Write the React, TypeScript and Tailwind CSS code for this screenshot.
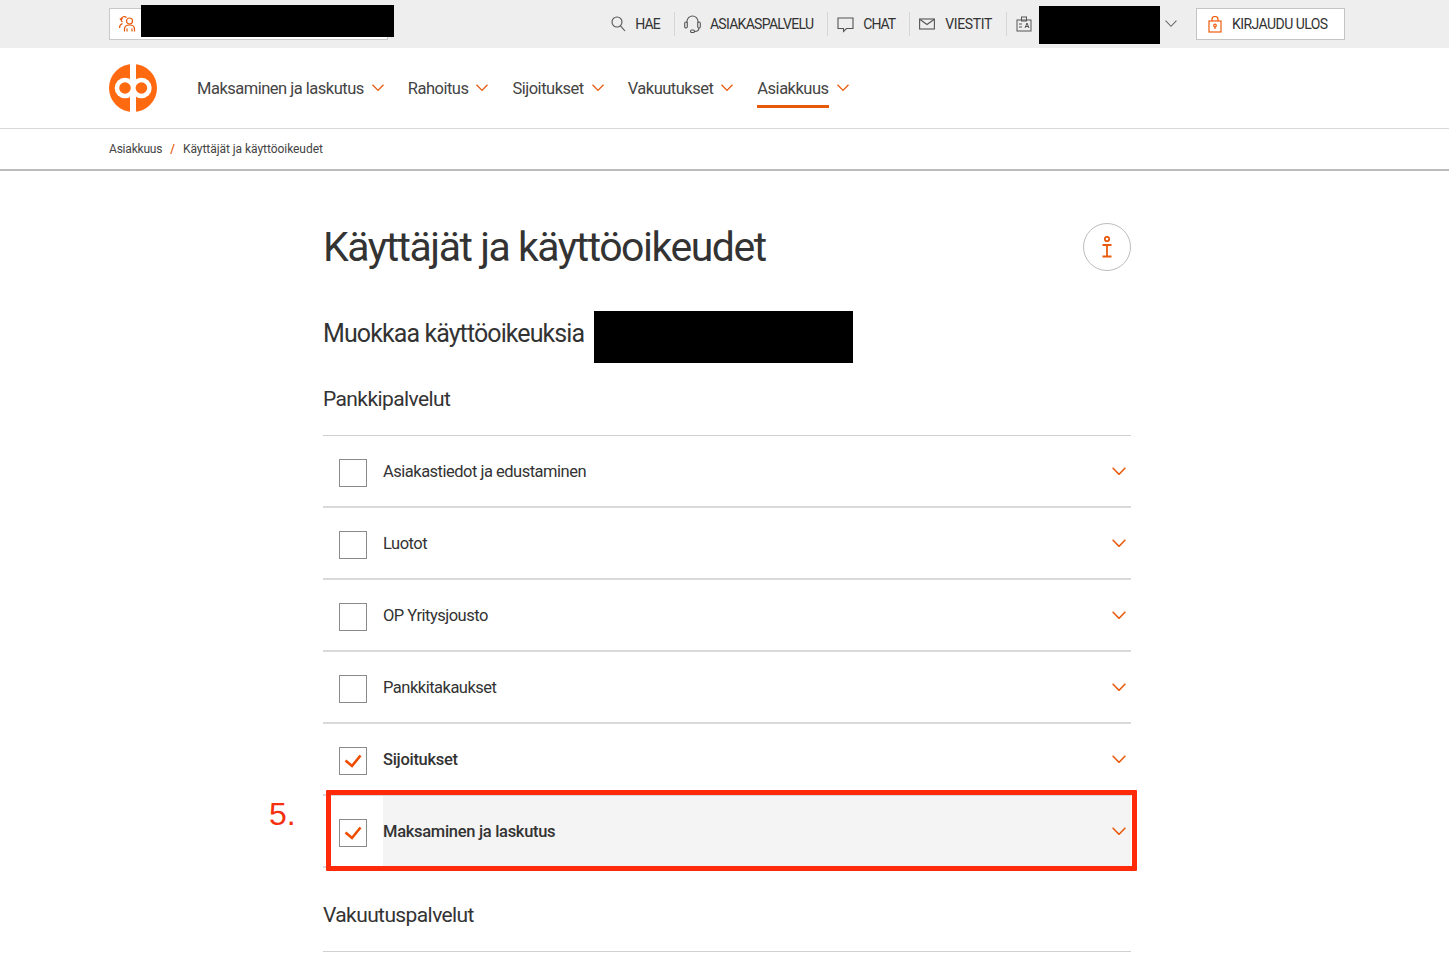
const font = "[font-family:Roboto,'Liberation_Sans',sans-serif]";

const navItems = [
  { label: 'Maksaminen ja laskutus', active: false },
  { label: 'Rahoitus', active: false },
  { label: 'Sijoitukset', active: false },
  { label: 'Vakuutukset', active: false },
  { label: 'Asiakkuus', active: true },
];

const rows = [
  { label: 'Asiakastiedot ja edustaminen', checked: false },
  { label: 'Luotot', checked: false },
  { label: 'OP Yritysjousto', checked: false },
  { label: 'Pankkitakaukset', checked: false },
  { label: 'Sijoitukset', checked: true },
  { label: 'Maksaminen ja laskutus', checked: true, open: true },
];

function OpLogo() {
  return (
    <svg width="48" height="48" viewBox="0 0 48 48">
      <circle cx="24" cy="24" r="24" fill="#ff6a10" />
      <rect x="21" y="0" width="6" height="48" fill="#fff" />
      <circle cx="16" cy="24" r="10.300" fill="#fff" />
      <circle cx="32.400" cy="24" r="10.300" fill="#fff" />
      <circle cx="16" cy="24" r="5.800" fill="#ff6a10" />
      <circle cx="32.400" cy="24" r="5.800" fill="#ff6a10" />
    </svg>
  );
}

function PeopleIcon() {
  return (
    <svg width="18" height="18" viewBox="0 0 18 18" fill="none" stroke="#e8590c" strokeWidth="1.200">
      <circle cx="11.500" cy="6" r="3" />
      <path d="M6.500 16.500v-2.500c0-2.500 2-4 5-4s5 1.500 5 4v2.500M9 16.500v-3M14 16.500v-3" />
      <path d="M8.500 2.700A3 3 0 0 0 3.200 4.500c0 1.200.5 2 1.300 2.600" />
      <path d="M1.500 13c0-2.300 1-3.800 3-4.500" />
      <path d="M1.800 3.500l1.500 1.300 1.200-1.600" />
    </svg>
  );
}

function SearchIcon() {
  return (
    <svg width="15" height="16" viewBox="0 0 15 16" fill="none" stroke="#555" strokeWidth="1.100">
      <circle cx="6" cy="6" r="5" />
      <path d="M9.500 9.800L14 15" />
    </svg>
  );
}

function HeadsetIcon() {
  return (
    <svg width="17" height="18" viewBox="0 0 17 18" fill="none" stroke="#555" strokeWidth="1.100">
      <path d="M3 8V6.500a5.500 5.500 0 0 1 11 0V8" />
      <rect x="0.700" y="7" width="2.600" height="6" rx="1.200" />
      <rect x="13.700" y="7" width="2.600" height="6" rx="1.200" />
      <path d="M15 13c0 2.500-2 3.500-4.500 3.500" />
      <rect x="6.500" y="15" width="4" height="2.500" rx="1.200" />
    </svg>
  );
}

function ChatIcon() {
  return (
    <svg width="17" height="17" viewBox="0 0 17 17" fill="none" stroke="#555" strokeWidth="1.100">
      <path d="M1 2h15v10.500H9.500L6.500 15.500v-3H1z" />
    </svg>
  );
}

function MailIcon() {
  return (
    <svg width="16" height="12" viewBox="0 0 16 12" fill="none" stroke="#555" strokeWidth="1.100">
      <rect x="0.600" y="1" width="14.800" height="10" />
      <path d="M1 1.500l7 5 7-5" />
    </svg>
  );
}

function BadgeIcon() {
  return (
    <svg width="16" height="16" viewBox="0 0 16 16" fill="none" stroke="#555" strokeWidth="1">
      <rect x="1" y="4" width="14" height="11" />
      <rect x="5.500" y="1" width="5" height="4" />
      <path d="M3 8h3M3 11h3M9 12l2-5 2 5M9.800 10.500h2.400" />
    </svg>
  );
}

function LockIcon() {
  return (
    <svg width="14" height="17" viewBox="0 0 14 17" fill="none" stroke="#f15a0c" strokeWidth="1.200">
      <rect x="1" y="5" width="12" height="11" />
      <path d="M4 5V3.500a3 3 0 0 1 6 0V5" />
      <circle cx="7" cy="9.500" r="1.300" />
      <path d="M7 11v2" />
    </svg>
  );
}

function Chevron({ width, color = '#e8590c', stroke = 1.500 }: { width: number; color?: string; stroke?: number }) {
  return (
    <svg width={width} height={width * 0.6} viewBox="0 0 14 8.400" fill="none" stroke={color} strokeWidth={stroke} className="shrink-0">
      <path d="M0.600 0.800L7 7.400L13.400 0.800" />
    </svg>
  );
}

function UtilityLink({ icon, label, className, labelClass }: { icon: React.ReactNode; label: string; className: string; labelClass: string }) {
  return (
    <div className={`flex h-[24px] items-center border-r border-[#d5d5d5] ${className}`}>
      {icon}
      <span className={`whitespace-nowrap text-[14px] text-[#333] ${labelClass}`}>{label}</span>
    </div>
  );
}

function CheckBox({ checked }: { checked: boolean }) {
  return (
    <div className="mt-[4px] flex h-[28px] w-[28px] shrink-0 items-center justify-center border border-[#8a8a8a] bg-white">
      {checked && (
        <svg width="18" height="14" viewBox="0 0 18 14" fill="none" stroke="#ee4d00" strokeWidth="2.600">
          <path d="M1.500 6.500L8 12L16.500 1.500" />
        </svg>
      )}
    </div>
  );
}

function AccordionRow({ label, checked, open }: { label: string; checked: boolean; open?: boolean }) {
  return (
    <div className="flex h-[72px] items-stretch border-b-2 border-[#dadada] pl-[16px]">
      <div className="flex w-[44px] shrink-0 items-center">
        <CheckBox checked={checked} />
      </div>
      <div className={`flex flex-1 items-center justify-between pr-[5px] ${open ? 'bg-[#f4f4f4]' : ''}`}>
        <span className={`pt-[2px] text-[16.500px] text-[#333] ${checked ? 'font-medium tracking-[-0.3px]' : 'tracking-[-0.5px]'}`}>{label}</span>
        <Chevron width={14} />
      </div>
    </div>
  );
}

export default function App() {
  return (
    <div className={`relative h-[956px] overflow-hidden bg-white ${font}`}>
      {/* Top utility bar */}
      <div className="flex h-[48px] items-center justify-between bg-[#eeeeee] pl-[109px] pr-[104px]">
        <div className="relative flex h-[32px] w-[279px] items-center border border-[#c8c8c8] bg-white pl-[8px]">
          <PeopleIcon />
          <div className="absolute left-[31px] top-[-4px] h-[32px] w-[253px] bg-black" />
        </div>
        <div className="flex items-center">
          <UtilityLink className="gap-[9px] pr-[14px]" labelClass="tracking-[-0.9px]" icon={<SearchIcon />} label="HAE" />
          <UtilityLink className="gap-[9px] pl-[9px] pr-[14px]" labelClass="tracking-[-0.7px]" icon={<HeadsetIcon />} label="ASIAKASPALVELU" />
          <UtilityLink className="gap-[9px] pl-[9px] pr-[14px]" labelClass="tracking-[-1px]" icon={<ChatIcon />} label="CHAT" />
          <UtilityLink className="gap-[10px] pl-[9px] pr-[14px]" labelClass="tracking-[-0.35px]" icon={<MailIcon />} label="VIESTIT" />
          <div className="ml-[9px] flex items-center">
            <BadgeIcon />
            <div className="ml-[7px] mt-[2px] h-[38px] w-[121px] bg-black" />
            <div className="ml-[5px]">
              <Chevron width={12} color="#666" stroke={1.200} />
            </div>
          </div>
          <div className="ml-[19px] flex h-[32px] w-[149px] items-center gap-[10px] border border-[#c4c4c4] bg-white pl-[11px]">
            <LockIcon />
            <span className="whitespace-nowrap text-[14px] tracking-[-0.55px] text-[#333]">KIRJAUDU ULOS</span>
          </div>
        </div>
      </div>

      {/* Main navigation */}
      <div className="flex h-[81px] items-center border-b border-[#d8d8d8] pl-[109px]">
        <OpLogo />
        <nav className="ml-[40px] flex items-center gap-[24px]">
          {navItems.map((item) => (
            <div key={item.label} className="flex items-center gap-[8px]">
              <span className={`flex h-[40px] items-center pt-[5px] text-[16.500px] tracking-[-0.5px] text-[#444] ${item.active ? 'border-b-[3px] border-[#e8590c]' : 'border-b-[3px] border-transparent'}`}>
                {item.label}
              </span>
              <Chevron width={12} />
            </div>
          ))}
        </nav>
      </div>

      {/* Breadcrumb */}
      <div className="flex h-[42px] items-center border-b-2 border-[#bbbbbb] pl-[109px] text-[12px] text-[#444]">
        <span className="tracking-[-0.2px]">Asiakkuus</span>
        <span className="ml-[8px] mr-[8px] font-medium text-[#e8590c]">/</span>
        <span className="tracking-[-0.05px]">Käyttäjät ja käyttöoikeudet</span>
      </div>

      {/* Content */}
      <main className="ml-[323px] w-[808px]">
        <div className="mt-[52px] flex h-[48px] items-center justify-between">
          <h1 className="text-[41px] leading-none tracking-[-1.480px] text-[#333]">Käyttäjät ja käyttöoikeudet</h1>
          <div className="flex h-[48px] w-[48px] items-center justify-center rounded-full border border-[#bdbdbd]">
            <svg width="12" height="22" viewBox="0 0 12 22" fill="none" stroke="#ea5a0c" strokeWidth="1.800">
              <circle cx="6" cy="3" r="2.200" />
              <path d="M1.500 9h9M6 9v11M1.500 20.500h9" />
            </svg>
          </div>
        </div>

        <div className="relative mt-[40px] flex h-[52px] items-center pb-[6px]">
          <h2 className="text-[25px] tracking-[-0.900px] text-[#333]">Muokkaa käyttöoikeuksia</h2>
          <div className="absolute left-[271px] top-0 h-[52px] w-[259px] bg-black" />
        </div>

        <h3 className="mt-[23px] text-[21px] leading-[26px] tracking-[-0.600px] text-[#333]">Pankkipalvelut</h3>

        <div className="mt-[23px] border-t border-[#d0d0d0]">
          {rows.map((row) => (
            <AccordionRow key={row.label} label={row.label} checked={row.checked} open={row.open} />
          ))}
        </div>

        <h3 className="mt-[34px] text-[21px] leading-[26px] tracking-[-0.600px] text-[#333]">Vakuutuspalvelut</h3>
        <div className="mt-[23px] border-t border-[#d0d0d0]" />
      </main>

      {/* Annotation */}
      <div className="absolute left-[269px] top-[795px] text-[32px] leading-[38px] text-[#f5300f] [font-family:'Liberation_Sans',sans-serif]">5.</div>
      <div className="absolute left-[326px] top-[790px] h-[81px] w-[811px] rounded-[1px] border-[5px] border-[#ff2a0a]" />
    </div>
  );
}
